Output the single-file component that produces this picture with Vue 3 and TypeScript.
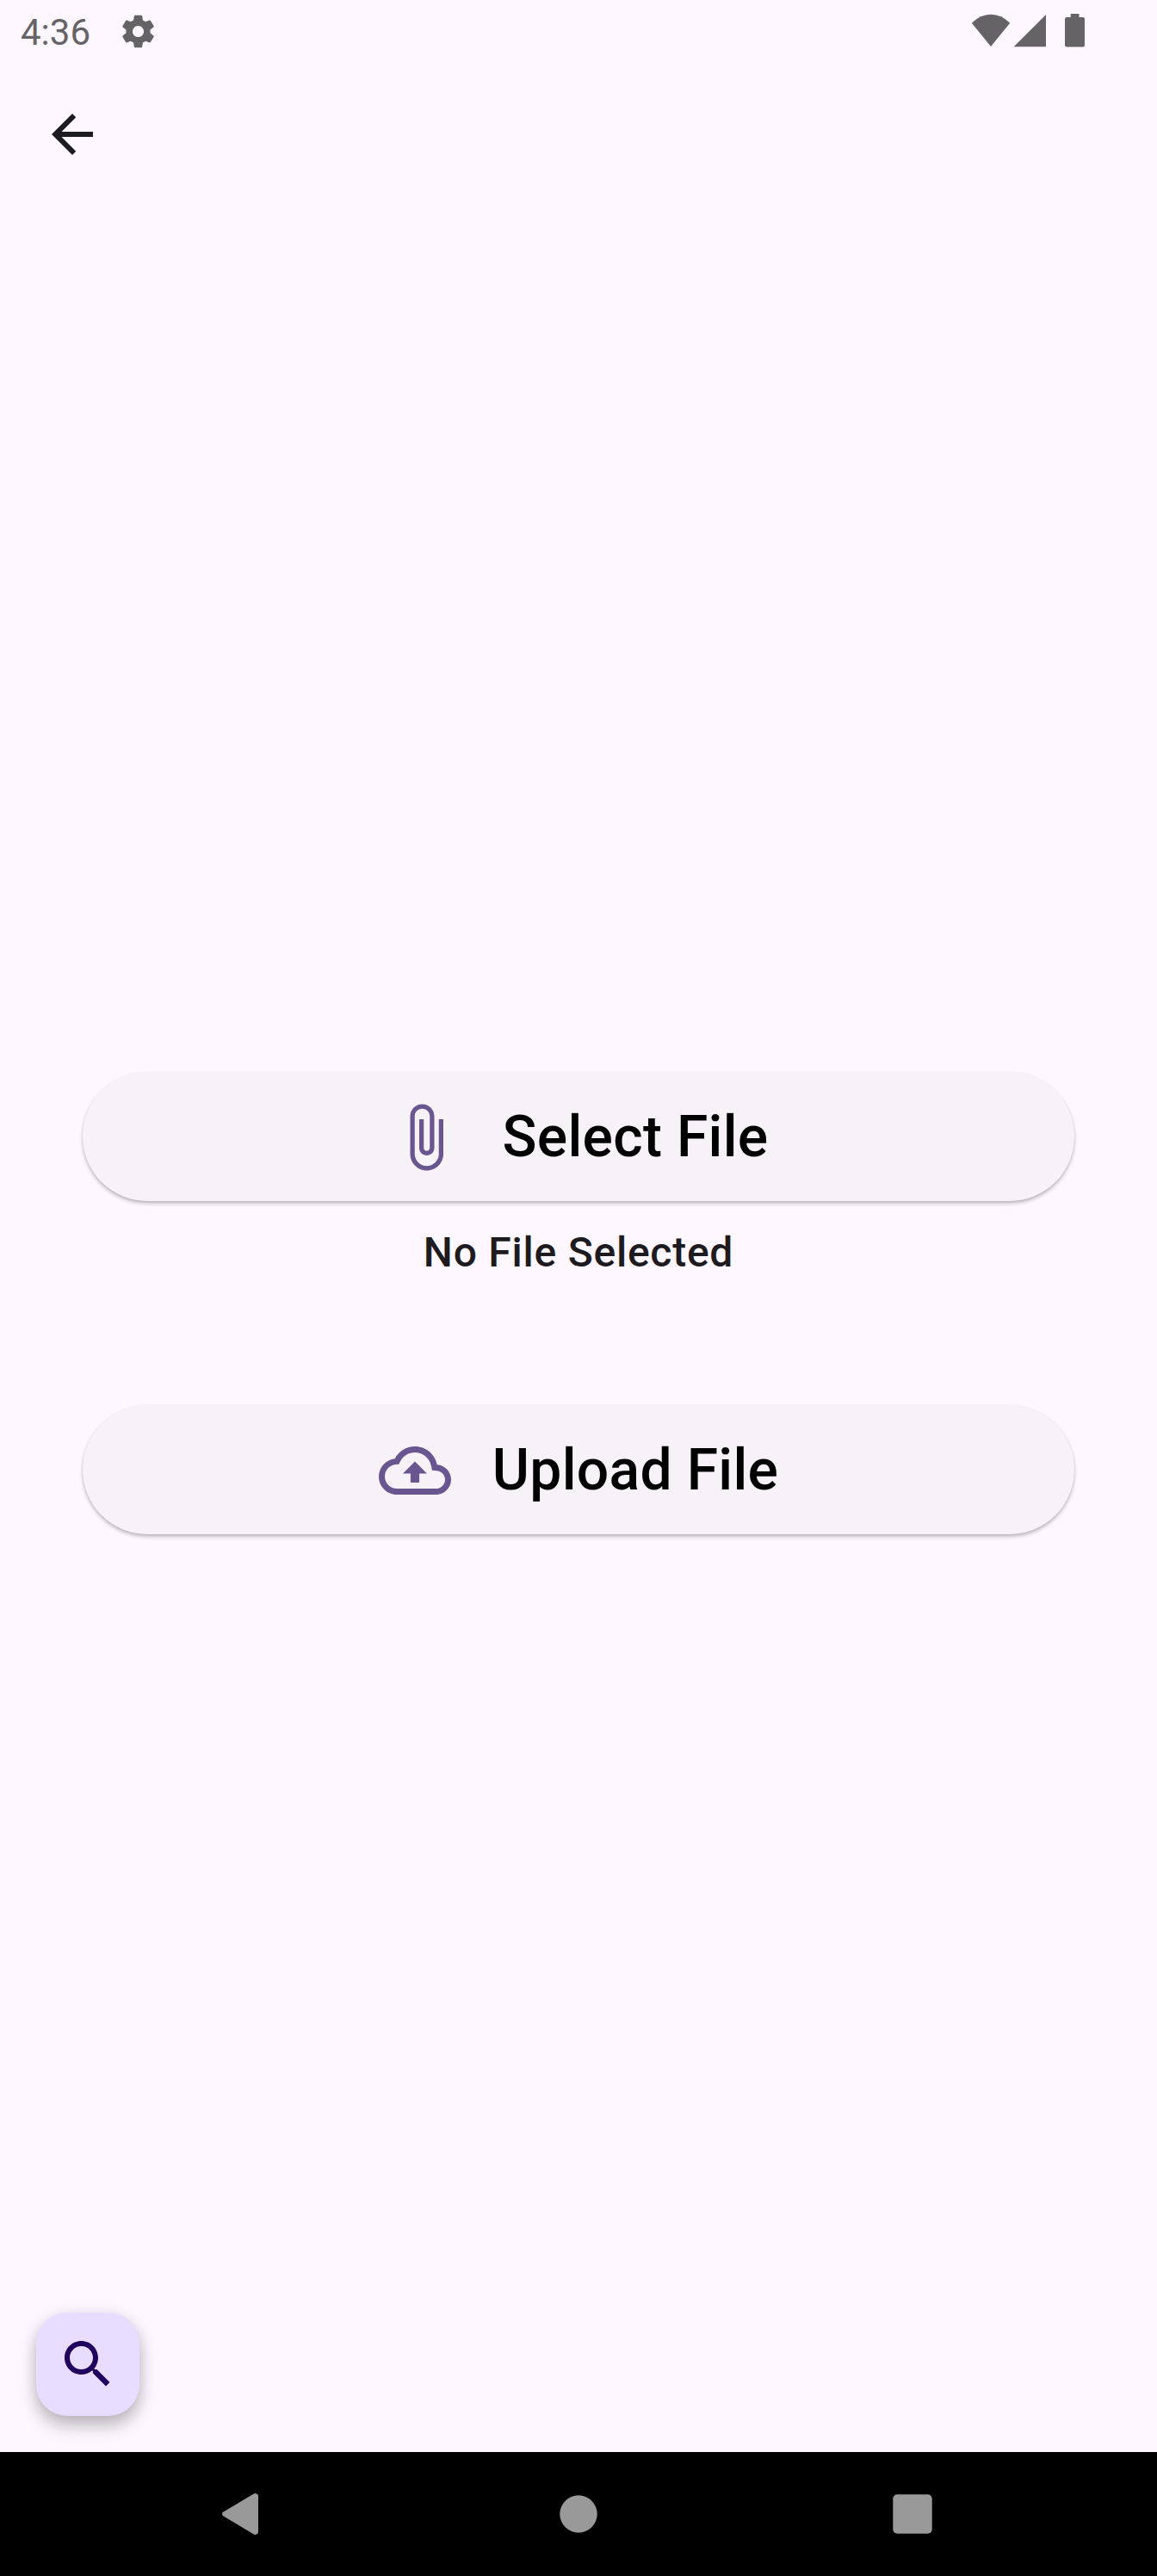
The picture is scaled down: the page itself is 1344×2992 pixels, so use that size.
<script setup lang="ts">
interface FileAction {
  id: string
  label: string
  icon: string
}

const selectAction: FileAction = {
  id: 'select',
  label: 'Select File',
  icon: 'M16.5 6v11.5c0 2.21-1.79 4-4 4s-4-1.79-4-4V5c0-1.38 1.12-2.5 2.5-2.5s2.5 1.12 2.5 2.5v10.5c0 .55-.45 1-1 1s-1-.45-1-1V6H10v9.5c0 1.38 1.12 2.5 2.5 2.5s2.5-1.12 2.5-2.5V5c0-2.21-1.79-4-4-4S7 2.79 7 5v12.5c0 3.04 2.46 5.5 5.5 5.5s5.5-2.46 5.5-5.5V6h-1.5z',
}

const uploadAction: FileAction = {
  id: 'upload',
  label: 'Upload File',
  icon: 'M19.35 10.04C18.67 6.59 15.64 4 12 4 9.11 4 6.6 5.64 5.35 8.04 2.34 8.36 0 10.91 0 14c0 3.31 2.69 6 6 6h13c2.76 0 5-2.24 5-5 0-2.64-2.05-4.78-4.65-4.96zM19 18H6c-2.21 0-4-1.79-4-4 0-2.05 1.53-3.76 3.56-3.97l1.07-.11.5-.95C8.08 7.14 9.94 6 12 6c2.62 0 4.88 1.86 5.39 4.43l.3 1.5 1.53.11c1.56.1 2.78 1.41 2.78 2.96 0 1.65-1.35 3-3 3zM8 13h2.55v3h2.9v-3H16l-4-4z',
}

const fileStatus: string = 'No File Selected'
</script>

<template>
  <div class="screen">
    <header class="status-bar">
      <div class="status-left">
        <span class="clock">4:36</span>
        <svg class="gear" viewBox="0 0 24 24">
          <path d="M19.43 12.98c.04-.32.07-.64.07-.98s-.03-.66-.07-.98l2.11-1.65c.19-.15.24-.42.12-.64l-2-3.46c-.12-.22-.39-.3-.61-.22l-2.49 1c-.52-.4-1.08-.73-1.69-.98l-.38-2.65C14.46 2.18 14.25 2 14 2h-4c-.25 0-.46.18-.49.42l-.38 2.65c-.61.25-1.17.59-1.69.98l-2.49-1c-.23-.09-.49 0-.61.22l-2 3.46c-.13.22-.07.49.12.64l2.11 1.65c-.04.32-.07.65-.07.98s.03.66.07.98l-2.11 1.65c-.19.15-.24.42-.12.64l2 3.46c.12.22.39.3.61.22l2.49-1c.52.4 1.08.73 1.69.98l.38 2.65c.03.24.24.42.49.42h4c.25 0 .46-.18.49-.42l.38-2.65c.61-.25 1.17-.59 1.69-.98l2.49 1c.23.09.49 0 .61-.22l2-3.46c.12-.22.07-.49-.12-.64l-2.11-1.65zM12 15.5c-1.93 0-3.5-1.57-3.5-3.5s1.57-3.5 3.5-3.5 3.5 1.57 3.5 3.5-1.57 3.5-3.5 3.5z" />
        </svg>
      </div>
      <svg class="status-right" viewBox="0 0 132 40">
        <path d="M0.8 10.8 Q10.5 0.7 23 0.7 T45.2 10.8 L23 38 Z" />
        <path d="M49.7 38.2 L87 1 V38.2 Z" />
        <path d="M115.7 0 h9.8 v4 h4.5 q2 0 2 2 v30.6 q0 2 -2 2 h-19 q-2 0 -2 -2 v-30.6 q0 -2 2 -2 h4.7 z" />
      </svg>
    </header>

    <nav class="app-bar">
      <button class="icon-button" aria-label="Back">
        <svg viewBox="0 0 24 24"><path d="M20 11H7.83l5.59-5.59L12 4l-8 8 8 8 1.41-1.41L7.83 13H20v-2z" /></svg>
      </button>
    </nav>

    <main class="content">
      <button class="file-button">
        <svg viewBox="0 0 24 24"><path :d="selectAction.icon" /></svg>
        <span>{{ selectAction.label }}</span>
      </button>
      <p class="file-status">{{ fileStatus }}</p>
      <button class="file-button">
        <svg viewBox="0 0 24 24"><path :d="uploadAction.icon" /></svg>
        <span>{{ uploadAction.label }}</span>
      </button>
    </main>

    <div class="fab-row">
      <button class="fab" aria-label="Search">
        <svg viewBox="0 0 24 24"><path d="M15.5 14h-.79l-.28-.27C15.41 12.59 16 11.11 16 9.5 16 5.91 13.09 3 9.5 3S3 5.91 3 9.5 5.91 16 9.5 16c1.61 0 3.09-.59 4.23-1.57l.27.28v.79l5 4.99L20.49 19l-4.99-5zm-6 0C7.01 14 5 11.99 5 9.5S7.01 5 9.5 5 14 7.01 14 9.5 11.99 14 9.5 14z" /></svg>
      </button>
    </div>

    <footer class="system-nav">
      <svg viewBox="0 0 48 48"><path d="M4.6 21.6 L39.8 .6 Q41.5 -.4 43.2 .4 Q45 1.2 45 3.2 V44.8 Q45 46.8 43.2 47.6 Q41.5 48.4 39.8 47.4 L4.6 26.4 Q3 25.4 3 24 Q3 22.6 4.6 21.6 Z" /></svg>
      <svg class="home" viewBox="0 0 48 48"><circle cx="24" cy="24" r="21.7" /></svg>
      <svg class="recents" viewBox="0 0 48 48"><rect x="1.3" y="1.3" width="45.4" height="45.4" rx="5" /></svg>
    </footer>
  </div>
</template>

<style>
body {
  margin: 0;
  background: #fef7ff;
}
</style>

<style scoped>
.screen {
  display: flex;
  flex-direction: column;
  width: 1344px;
  height: 2992px;
  background: #fef7ff;
  font-family: Roboto, sans-serif;
  overflow: hidden;
}

svg {
  display: block;
  flex: none;
  fill: currentColor;
}

button {
  display: flex;
  align-items: center;
  justify-content: center;
  padding: 0;
  border: 0;
  background: none;
  font: inherit;
}

.status-bar {
  display: flex;
  justify-content: space-between;
  align-items: flex-start;
  height: 72px;
  padding: 0 84px 0 24px;
  box-sizing: border-box;
  color: #666367;
}

.status-left {
  display: flex;
  align-items: flex-start;
}

.clock {
  width: 114px;
  font-size: 42px;
  line-height: 49px;
  margin-top: 13px;
}

.gear {
  width: 45px;
  height: 45px;
  margin: 13.5px 0 0 -.5px;
}

.status-right {
  width: 132px;
  height: 40px;
  margin-top: 16px;
}

.app-bar {
  display: flex;
  align-items: center;
  height: 168px;
  padding-left: 48px;
  color: #1d1b20;
}

.icon-button {
  color: inherit;
}

.icon-button svg,
.fab svg {
  width: 72px;
  height: 72px;
}

.content {
  display: flex;
  flex: 1;
  flex-direction: column;
  padding: 1005px 96px 0;
}

.file-button {
  flex: none;
  gap: 48px;
  height: 150px;
  border-radius: 75px;
  background: #f7f1f8;
  box-shadow: 0 3px 4px rgba(0, 0, 0, 0.22), 0 1px 3px rgba(0, 0, 0, 0.08);
  color: #000;
  font-size: 66px;
  font-weight: 500;
  letter-spacing: 0.3px;
}

.file-button svg {
  width: 84px;
  height: 84px;
  margin-top: 2px;
  color: #69558f;
}

.file-status {
  margin: 24px 0 141px;
  color: #1d1b20;
  font-size: 48px;
  font-weight: 500;
  line-height: 72px;
  letter-spacing: 0.75px;
  text-align: center;
}

.fab-row {
  display: flex;
  padding: 0 42px 42px;
}

.fab {
  width: 120px;
  height: 120px;
  border-radius: 36px;
  background: #e9ddff;
  color: #22005d;
  box-shadow: 0 12px 20px rgba(0, 0, 0, 0.22), 0 3px 18px rgba(0, 0, 0, 0.1);
}

.system-nav {
  display: flex;
  flex: none;
  align-items: center;
  height: 144px;
  padding-left: 255px;
  background: #000;
  color: #999;
}

.system-nav svg {
  width: 48px;
  height: 48px;
}

.system-nav .home {
  margin-left: 345px;
}

.system-nav .recents {
  margin-left: 340px;
}
</style>
